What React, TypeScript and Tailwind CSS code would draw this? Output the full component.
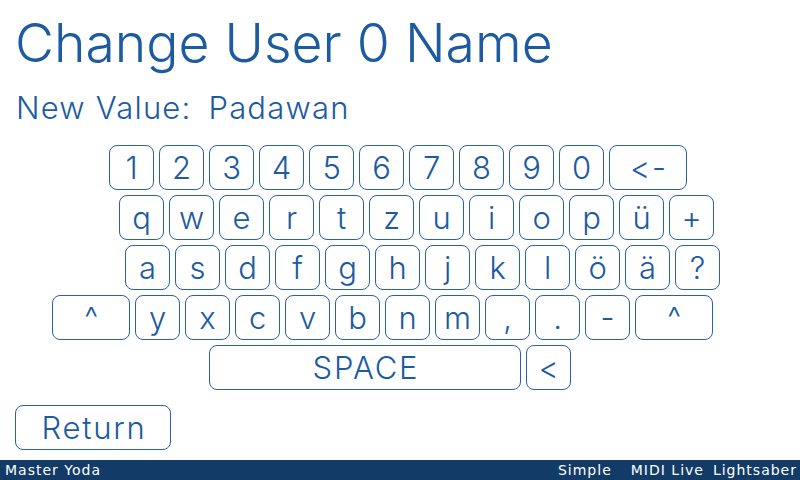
import React from "react";

const rows: { keys: string[]; ml: string }[] = [
  { keys: ["1", "2", "3", "4", "5", "6", "7", "8", "9", "0", "<-"], ml: "ml-[109px]" },
  { keys: ["q", "w", "e", "r", "t", "z", "u", "i", "o", "p", "ü", "+"], ml: "ml-[119px]" },
  { keys: ["a", "s", "d", "f", "g", "h", "j", "k", "l", "ö", "ä", "?"], ml: "ml-[125px]" },
  { keys: ["^", "y", "x", "c", "v", "b", "n", "m", ",", ".", "-", "^ "], ml: "ml-[52px]" },
];

function Key({ label, wide }: { label: string; wide?: boolean }) {
  return (
    <div
      className={`${wide ? "w-[78px]" : "w-[45px]"} h-[45px] shrink-0 rounded-[8px] border border-[#2a62a6] flex items-center justify-center pl-[2px] text-[31px] tracking-[1.8px] leading-none text-[#1c5ba2]`}
    >
      {label.trim()}
    </div>
  );
}

export default function App() {
  return (
    <div className="w-[800px] h-[480px] bg-white flex flex-col overflow-hidden font-['Inter',sans-serif] font-light [font-variant-ligatures:none] [font-feature-settings:'calt'_0,'liga'_0] text-[#1c5ba2]">
      {/* Header */}
      <div className="pl-[15px] pt-[15px] text-[53.5px] leading-[55px]">Change User 0 Name</div>
      <div className="pl-[16px] pt-[22px] text-[31px] tracking-[1.2px] leading-[31px] flex gap-[17px]">
        <span>New Value:</span>
        <span>Padawan</span>
      </div>

      {/* Keyboard */}
      <div className="mt-[22px] flex flex-col gap-[5px]">
        {rows.map((row, i) => (
          <div key={i} className={`${row.ml} flex gap-[5px]`}>
            {row.keys.map((k, j) => (
              <Key key={j} label={k} wide={k === "<-" || k.startsWith("^")} />
            ))}
          </div>
        ))}
        <div className="ml-[209px] flex gap-[5px]">
          <div className="w-[312px] h-[45px] rounded-[8px] border border-[#2a62a6] flex items-center justify-center pl-[2px] text-[31px] tracking-[1.8px] leading-none">
            SPACE
          </div>
          <Key label="<" />
        </div>
      </div>

      <div className="mt-[15px] ml-[15px]">
        <div className="w-[156px] h-[45px] rounded-[8px] border border-[#2a62a6] flex items-center justify-center pl-[2px] text-[31px] tracking-[1.8px] leading-none">
          Return
        </div>
      </div>

      {/* Status bar */}
      <div className="mt-auto h-[20px] bg-[#123c67] text-white flex items-center pl-[5px] pr-[3px] text-[14px] tracking-[1px] font-normal font-['DejaVu_Sans',sans-serif]">
        <span>Master Yoda</span>
        <span className="ml-auto">Simple</span>
        <span className="ml-[19px]">MIDI Live</span>
        <span className="ml-[9px]">Lightsaber</span>
      </div>
    </div>
  );
}
